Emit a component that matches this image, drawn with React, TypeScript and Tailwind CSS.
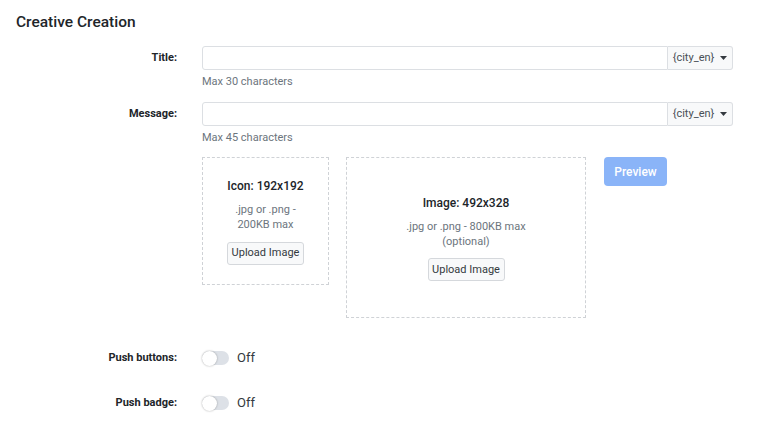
import React from 'react';

const FieldRow = ({ label, hint }: { label: string; hint: string }) => (
  <div className="flex">
    <div className="w-[161px] h-6 flex items-center justify-end text-[11px] font-bold text-[#212529]">{label}</div>
    <div className="ml-[25px] w-[531px]">
      <div className="flex h-6">
        <input className="flex-1 h-6 border border-[#dcdfe3] rounded-l-[3px] outline-none px-2 text-[11px]" />
        <button className="h-6 w-[65px] flex items-center justify-center gap-[6px] bg-[#f8f9fa] border border-l-0 border-[#dcdfe3] rounded-r-[3px] text-[11px] text-[#495057]">
          <span>{'{city_en}'}</span>
          <svg width="7" height="4" viewBox="0 0 7 4"><path d="M0 0h7L3.5 4z" fill="#343a40" /></svg>
        </button>
      </div>
      <div className="mt-[4px] text-[11px] leading-[15px] text-[#6c757d]">{hint}</div>
    </div>
  </div>
);

const Toggle = ({ label }: { label: string }) => (
  <div className="flex items-center h-6">
    <div className="w-[161px] flex justify-end text-[11px] font-bold text-[#212529]">{label}</div>
    <div className="ml-[25px] flex items-center gap-[8px]">
      <div className="w-[27px] h-[14px] rounded-full bg-[#dde1e7] flex items-center">
        <div className="w-[15px] h-[15px] rounded-full bg-white shadow-[0_0_2px_rgba(0,0,0,0.35)]" />
      </div>
      <span className="text-[13px] text-[#343a40]">Off</span>
    </div>
  </div>
);

const UploadButton = () => (
  <button className="h-[23px] w-[77px] border border-[#d5d8dc] rounded-[3px] bg-[#f8f9fa] text-[11px] text-[#343a40]">Upload Image</button>
);

export default function App() {
  return (
    <div className="w-[770px] h-[421px] bg-white px-4 pt-[10px]" style={{ fontFamily: 'Roboto, "Liberation Sans", sans-serif' }}>
      <h1 className="text-[15.5px] leading-6 font-medium text-[#212529]">Creative Creation</h1>
      <div className="mt-[12px] flex flex-col gap-[13px]">
        <FieldRow label="Title:" hint="Max 30 characters" />
        <FieldRow label="Message:" hint="Max 45 characters" />
      </div>
      <div className="mt-[12px] ml-[186px] flex items-start">
        <div className="w-[127px] h-[128px] border border-dashed border-[#cfd2d6] flex flex-col items-center justify-center text-center">
          <div className="text-[12px] font-medium text-[#212529]">Icon: 192x192</div>
          <div className="mt-[7px] text-[11px] leading-[15px] text-[#6c757d]">.jpg or .png -<br />200KB max</div>
          <div className="mt-[7px]"><UploadButton /></div>
        </div>
        <div className="ml-[17px] w-[240px] h-[161px] border border-dashed border-[#cfd2d6] flex flex-col items-center justify-center text-center">
          <div className="text-[12px] font-medium text-[#212529]">Image: 492x328</div>
          <div className="mt-[7px] text-[11px] leading-[15px] text-[#6c757d]">.jpg or .png - 800KB max<br />(optional)</div>
          <div className="mt-[7px]"><UploadButton /></div>
        </div>
        <button className="ml-[18px] w-[63px] h-[29px] rounded-[4px] bg-[#8ab4f8] text-white text-[12px] font-medium">Preview</button>
      </div>
      <div className="mt-[28px] flex flex-col gap-[21px]">
        <Toggle label="Push buttons:" />
        <Toggle label="Push badge:" />
      </div>
    </div>
  );
}
